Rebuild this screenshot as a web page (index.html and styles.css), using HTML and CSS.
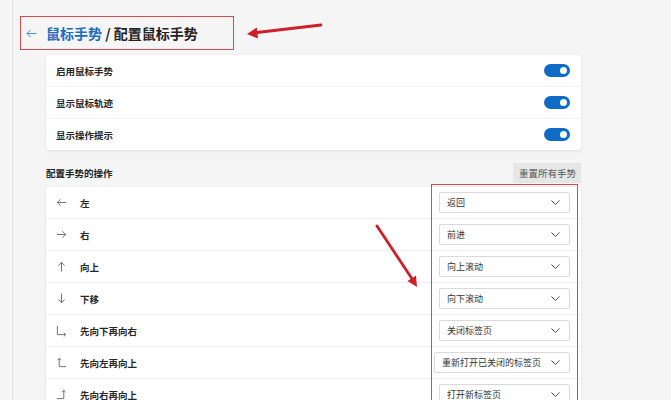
FILE: index.html
```html
<!DOCTYPE html>
<html lang="zh-CN">
<head>
    <meta charset="UTF-8">
    <meta name="viewport" content="width=device-width, initial-scale=1.0">
    <title>配置鼠标手势</title>
    <link rel="stylesheet" href="styles.css">
</head>
<body>

    <div class="frame">

        <!-- Title -->
        <div class="title-box">
            <svg class="back" width="11" height="9" viewBox="0 0 11 9">
                <path d="M10.5 4.5H1M4.5 1L1 4.5L4.5 8" fill="none" stroke="#4a8fd6" stroke-width="1"/>
            </svg>
            <span class="crumb">鼠标手势</span>
            <span class="title">&nbsp;/ 配置鼠标手势</span>
        </div>

        <div class="content">

            <!-- Switches -->
            <div class="card">
                <div class="row">
                    <span class="label">启用鼠标手势</span>
                    <span class="toggle"></span>
                </div>
                <div class="row">
                    <span class="label">显示鼠标轨迹</span>
                    <span class="toggle"></span>
                </div>
                <div class="row">
                    <span class="label">显示操作提示</span>
                    <span class="toggle"></span>
                </div>
            </div>

            <!-- Gestures -->
            <div class="section-head">
                <span class="section-title">配置手势的操作</span>
                <span class="reset">重置所有手势</span>
            </div>

            <div class="card">
                <div class="row gesture">
                    <svg class="icon" viewBox="0 0 12 12"><path d="M11 6H1.5M5 2.5L1.5 6L5 9.5"/></svg>
                    <span class="label">左</span>
                    <div class="select"><span>返回</span><svg width="9" height="5" viewBox="0 0 9 5"><path d="M0.5 0.5L4.5 4.5L8.5 0.5"/></svg></div>
                </div>
                <div class="row gesture">
                    <svg class="icon" viewBox="0 0 12 12"><path d="M1 6H10.5M7 2.5L10.5 6L7 9.5"/></svg>
                    <span class="label">右</span>
                    <div class="select"><span>前进</span><svg width="9" height="5" viewBox="0 0 9 5"><path d="M0.5 0.5L4.5 4.5L8.5 0.5"/></svg></div>
                </div>
                <div class="row gesture">
                    <svg class="icon" viewBox="0 0 12 12"><path d="M6 11.5V1.5M2.5 5L6 1.5L9.5 5"/></svg>
                    <span class="label">向上</span>
                    <div class="select"><span>向上滚动</span><svg width="9" height="5" viewBox="0 0 9 5"><path d="M0.5 0.5L4.5 4.5L8.5 0.5"/></svg></div>
                </div>
                <div class="row gesture">
                    <svg class="icon" viewBox="0 0 12 12"><path d="M6 0.5V10.5M2.5 7L6 10.5L9.5 7"/></svg>
                    <span class="label">下移</span>
                    <div class="select"><span>向下滚动</span><svg width="9" height="5" viewBox="0 0 9 5"><path d="M0.5 0.5L4.5 4.5L8.5 0.5"/></svg></div>
                </div>
                <div class="row gesture">
                    <svg class="icon" viewBox="0 0 12 12"><path d="M1.5 1V10.5H10.5M8.5 8.5L10.5 10.5L8.5 12.5"/></svg>
                    <span class="label">先向下再向右</span>
                    <div class="select"><span>关闭标签页</span><svg width="9" height="5" viewBox="0 0 9 5"><path d="M0.5 0.5L4.5 4.5L8.5 0.5"/></svg></div>
                </div>
                <div class="row gesture">
                    <svg class="icon" viewBox="0 0 12 12"><path d="M11 10.5H3.5V1.5M1.5 3.5L3.5 1.5L5.5 3.5"/></svg>
                    <span class="label">先向左再向上</span>
                    <div class="select"><span>重新打开已关闭的标签页</span><svg width="9" height="5" viewBox="0 0 9 5"><path d="M0.5 0.5L4.5 4.5L8.5 0.5"/></svg></div>
                </div>
                <div class="row gesture">
                    <svg class="icon" viewBox="0 0 12 12"><path d="M1 10.5H8.5V1.5M6.5 3.5L8.5 1.5L10.5 3.5"/></svg>
                    <span class="label">先向右再向上</span>
                    <div class="select"><span>打开新标签页</span><svg width="9" height="5" viewBox="0 0 9 5"><path d="M0.5 0.5L4.5 4.5L8.5 0.5"/></svg></div>
                </div>
            </div>
        </div>

        <!-- Annotations -->
        <div class="mark-box"></div>
        <svg class="marks" width="658" height="400" viewBox="0 0 658 400">
            <line x1="308" y1="25" x2="244" y2="32.5" stroke="#cf1f2b" stroke-width="2.8" stroke-linecap="round"/>
            <polygon points="234,34 245,38.5 243.8,27.5" fill="#cf1f2b"/>
            <line x1="364" y1="226" x2="398.5" y2="278" stroke="#cf1f2b" stroke-width="2.8" stroke-linecap="round"/>
            <polygon points="404,287 394.5,281 403,275.5" fill="#cf1f2b"/>
        </svg>

    </div>

</body>
</html>
```

FILE: styles.css
```css
body {
    margin: 0;
    background-color: #f5f5f5;
    font-family: "Noto Sans CJK SC", "Noto Sans", sans-serif;
    color: #222;
    overflow: hidden;
}

.frame {
    position: relative;
    margin-left: 12px;
    border-left: 1px solid #e2e2e2;
    height: 400px;
    padding: 16px 0 0 7px;
    box-sizing: border-box;
    overflow: hidden;
}

/* Title */
.title-box {
    display: flex;
    align-items: center;
    box-sizing: border-box;
    width: 214px;
    height: 34px;
    padding-left: 5px;
    border: 1px solid #d9474f;
    font-size: 14px;
    font-weight: 700;
}

.back {
    margin-right: 9px;
}

.crumb {
    color: #1a6dc0;
}

.title {
    color: #222;
}

/* Content */
.content {
    margin-left: 26px;
    width: 535px;
}

.card {
    background-color: white;
    border-radius: 3px;
    box-shadow: 0 1px 3px rgba(0, 0, 0, 0.1);
    margin-top: 5px;
}

.row {
    display: flex;
    align-items: center;
    height: 31px;
    padding: 0 11px 0 10px;
    border-bottom: 1px solid #f0f0f0;
}

.row:last-child {
    border-bottom: none;
}

.label {
    font-size: 9.5px;
    font-weight: 700;
    color: #262626;
}

.toggle {
    position: relative;
    margin-left: auto;
    width: 26px;
    height: 13px;
    border-radius: 7px;
    background-color: #0f6cc4;
}

.toggle::after {
    content: "";
    position: absolute;
    top: 3px;
    right: 3px;
    width: 7px;
    height: 7px;
    border-radius: 50%;
    background-color: white;
}

/* Gestures */
.section-head {
    display: flex;
    justify-content: space-between;
    align-items: center;
    height: 20px;
    margin-top: 13px;
}

.section-title {
    font-size: 9.5px;
    font-weight: 700;
    color: #222;
}

.reset {
    display: flex;
    align-items: center;
    height: 20px;
    padding: 0 5px 0 6px;
    background-color: #e6e6e6;
    font-size: 9.5px;
    color: #555;
}

.section-head + .card {
    margin-top: 4px;
}

.gesture .icon {
    width: 11px;
    height: 11px;
    margin-right: 13px;
    fill: none;
    stroke: #666;
    stroke-width: 1;
    overflow: visible;
}

.select {
    display: flex;
    align-items: center;
    justify-content: space-between;
    gap: 10px;
    margin-left: auto;
    box-sizing: border-box;
    min-width: 131px;
    height: 21px;
    padding: 0 9px 0 7px;
    border: 1px solid #dadada;
    border-radius: 2px;
    background-color: white;
    font-size: 9px;
    color: #333;
}

.select svg path {
    fill: none;
    stroke: #555;
    stroke-width: 1;
}

/* Annotations */
.mark-box {
    position: absolute;
    left: 418px;
    top: 184px;
    width: 147px;
    height: 260px;
    box-sizing: border-box;
    border: 1px solid #d9474f;
}

.marks {
    position: absolute;
    left: 0;
    top: 0;
    pointer-events: none;
}
```
